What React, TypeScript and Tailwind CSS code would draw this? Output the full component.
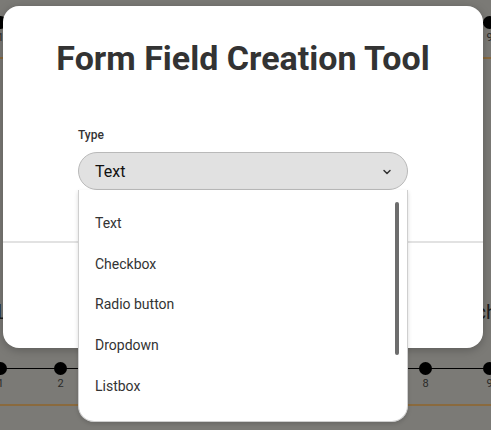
import { ChevronDown } from "lucide-react";

const options = ["Text", "Checkbox", "Radio button", "Dropdown", "Listbox"];

function Stepper({ left, right }: { left: string[]; right: string[] }) {
    return (
        <div className="relative h-[34px] w-full">
            <div className="absolute left-0 right-0 top-[6px] h-px bg-black" />
            <div className="absolute left-[-6px] top-0 flex flex-col items-center">
                <span className="h-[13px] w-[13px] rounded-full bg-black" />
                <span className="mt-[3px] text-[11px] leading-none text-[#2a2a2a]">{left[0]}</span>
            </div>
            {left[1] && (
                <div className="absolute left-[54px] top-0 flex flex-col items-center">
                    <span className="h-[13px] w-[13px] rounded-full bg-black" />
                    <span className="mt-[3px] text-[11px] leading-none text-[#2a2a2a]">{left[1]}</span>
                </div>
            )}
            {right[0] && (
                <div className="absolute left-[419px] top-0 flex flex-col items-center">
                    <span className="h-[13px] w-[13px] rounded-full bg-black" />
                    <span className="mt-[3px] text-[11px] leading-none text-[#2a2a2a]">{right[0]}</span>
                </div>
            )}
            <div className="absolute left-[483px] top-0 flex flex-col items-center">
                <span className="h-[13px] w-[13px] rounded-full bg-black" />
                <span className="mt-[3px] text-[11px] leading-none text-[#2a2a2a]">{right[1]}</span>
            </div>
        </div>
    );
}

export default function App() {
    return (
        <div className="relative h-[430px] w-[491px] overflow-hidden bg-[#7b7a76] font-['Roboto',sans-serif]">
            {/* page behind the overlay */}
            <div className="flex flex-col">
                <div className="pt-[16px]">
                    <Stepper left={["1"]} right={["", "9"]} />
                </div>
                <div className="mt-[7px] h-[2px] w-full bg-[#8a6a3e]" />
                <div className="mt-[243px] flex justify-between text-[20px] leading-none text-[#1e1e1e]">
                    <span className="-ml-[3px]">L</span>
                    <span className="-mr-[6px]">ch</span>
                </div>
                <div className="mt-[40px]">
                    <Stepper left={["1", "2"]} right={["8", "9"]} />
                </div>
                <div className="mt-[8px] h-[2px] w-full bg-[#8a6a3e]" />
            </div>

            {/* modal */}
            <div className="absolute left-[3px] top-[6px] h-[342px] w-[480px] rounded-[16px] bg-white shadow-[0_2px_10px_rgba(0,0,0,0.25)]">
                <h1 className="pt-[32px] text-center text-[34px] font-bold leading-[40px] text-[#333333]">
                    Form Field Creation Tool
                </h1>
                <div className="mt-[55px] h-[110px] border-b-2 border-[#e2e2e2]" />
            </div>

            {/* select + open list */}
            <div className="absolute left-[78px] top-[127px] w-[330px]">
                <label className="block text-[12px] font-medium leading-[16px] text-[#333333]">Type</label>
                <div className="mt-[9px] flex h-[38px] items-center justify-between rounded-full border border-[#b9b9b9] bg-[#e1e1e1] pl-[16px] pr-[14px] pt-[2px]">
                    <span className="text-[16px] text-[#111111]">Text</span>
                    <ChevronDown size={12} strokeWidth={3} className="text-[#333333]" />
                </div>
                <div className="relative h-[232px] rounded-b-[16px] border-x border-b border-[#cfcfcf] bg-white pt-[13px] shadow-[0_2px_4px_rgba(0,0,0,0.15)]">
                    <ul className="flex flex-col">
                        {options.map((o) => (
                            <li key={o} className="flex h-[40.7px] items-center pl-[16px] text-[14px] text-[#333333]">
                                {o}
                            </li>
                        ))}
                    </ul>
                    <div className="absolute right-[8px] top-[12px] h-[153px] w-[4px] rounded-full bg-[#6d6d6d]" />
                </div>
            </div>
        </div>
    );
}
